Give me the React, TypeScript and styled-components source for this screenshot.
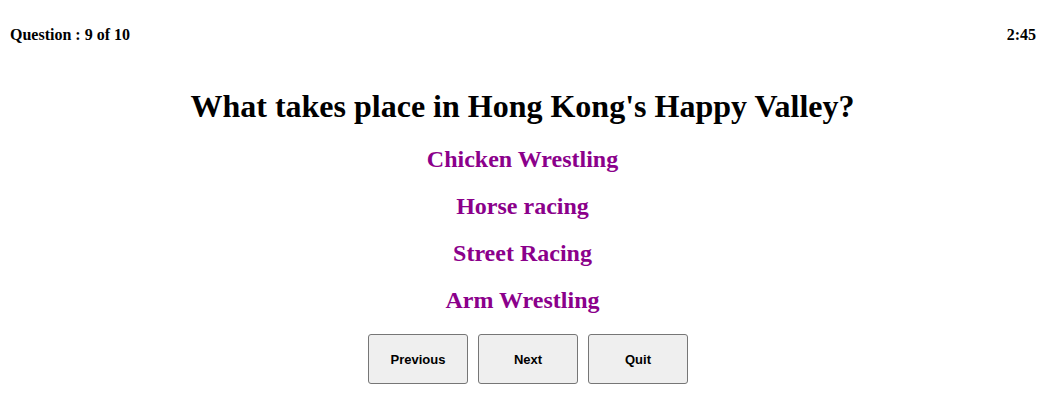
import React from "react";
import styled, { createGlobalStyle } from "styled-components";

const GlobalStyle = createGlobalStyle`
  html, body {
    margin: 0;
    padding: 0;
    background: #ffffff;
  }
  body {
    font-family: "Liberation Serif", "Times New Roman", serif;
    color: #000000;
  }
`;

const Page = styled.div`
  display: flex;
  flex-direction: column;
  width: 100%;
`;

const Header = styled.div`
  display: flex;
  justify-content: space-between;
  align-items: flex-start;
  padding: 26px 13px 0 10px;
  font-size: 16px;
  line-height: 18px;
  font-weight: bold;
`;

const Quiz = styled.div`
  display: flex;
  flex-direction: column;
  align-items: center;
  margin-top: 44px;
  padding-right: 4px;
`;

const Title = styled.h1`
  margin: 0 0 20px;
  font-size: 32px;
  line-height: 37px;
  font-weight: bold;
`;

const Options = styled.div`
  display: flex;
  flex-direction: column;
  align-items: center;
  gap: 19px;
`;

const Option = styled.div`
  font-size: 24px;
  line-height: 28px;
  font-weight: bold;
  color: #8b008b;
  cursor: pointer;
`;

const Buttons = styled.div`
  display: flex;
  gap: 10px;
  margin-top: 20px;
  padding-left: 11px;
`;

const Button = styled.button`
  width: 100px;
  height: 50px;
  box-sizing: border-box;
  border: 1px solid #767676;
  border-radius: 3px;
  background: #efefef;
  font-family: "Liberation Sans", Arial, sans-serif;
  font-size: 13px;
  font-weight: bold;
  color: #000000;
  padding: 0;
`;

const options = ["Chicken Wrestling", "Horse racing", "Street Racing", "Arm Wrestling"];

export default function App() {
  return (
    <>
      <GlobalStyle />
      <Page>
        <Header>
          <span>Question : 9 of 10</span>
          <span>2:45</span>
        </Header>
        <Quiz>
          <Title>What takes place in Hong Kong's Happy Valley?</Title>
          <Options>
            {options.map((o) => (
              <Option key={o}>{o}</Option>
            ))}
          </Options>
          <Buttons>
            <Button>Previous</Button>
            <Button>Next</Button>
            <Button>Quit</Button>
          </Buttons>
        </Quiz>
      </Page>
    </>
  );
}
